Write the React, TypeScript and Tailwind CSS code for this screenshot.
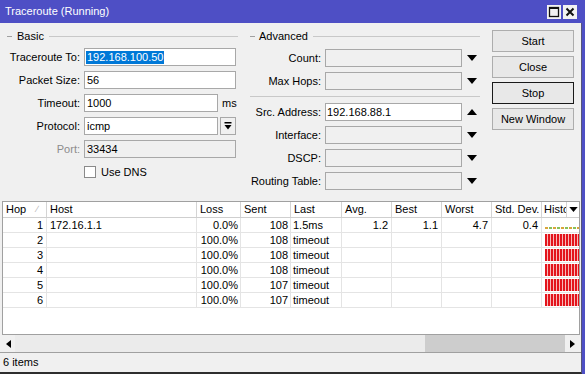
import React from "react";

function Down() {
  return (
    <svg width="10" height="6" viewBox="0 0 10 6">
      <polygon points="0,0 10,0 5,6" fill="#000" />
    </svg>
  );
}
function Up() {
  return (
    <svg width="10" height="6" viewBox="0 0 10 6">
      <polygon points="0,6 10,6 5,0" fill="#000" />
    </svg>
  );
}

function Input({ w, children, disabled }: { w: string; children?: React.ReactNode; disabled?: boolean }) {
  return (
    <div
      className={
        "h-[18px] border border-[#a8a8a8] flex items-center pl-[1px] whitespace-nowrap overflow-hidden " +
        w +
        (disabled ? " bg-[#f0f0f0]" : " bg-white")
      }
    >
      {children}
    </div>
  );
}

function BRow({ label, children, gray }: { label: string; children: React.ReactNode; gray?: boolean }) {
  return (
    <div className="h-[18px] flex items-center">
      <div className={"w-[80px] text-right " + (gray ? "text-[#8c8c8c]" : "")}>{label}</div>
      <div className="ml-[4px] flex items-center">{children}</div>
    </div>
  );
}

function ARow({ label, value, up }: { label: string; value?: string; up?: boolean }) {
  return (
    <div className="h-[18px] flex items-center">
      <div className="w-[77px] text-right whitespace-nowrap">{label}</div>
      <div className="ml-[4px]">
        <Input w="w-[137px]" disabled={!value}>
          {value}
        </Input>
      </div>
      <div className="w-[20px] flex justify-center">{up ? <Up /> : <Down />}</div>
    </div>
  );
}

function Btn({ label, focus }: { label: string; focus?: boolean }) {
  return (
    <div
      className={
        "w-[82px] h-[22px] flex items-center justify-center bg-[#e8e8e8] border " +
        (focus ? "border-[#1a1a1a]" : "border-[#adadad]")
      }
    >
      {label}
    </div>
  );
}

const rows = [
  { hop: "1", host: "172.16.1.1", loss: "0.0%", sent: "108", last: "1.5ms", avg: "1.2", best: "1.1", worst: "4.7", sd: "0.4", ok: true },
  { hop: "2", host: "", loss: "100.0%", sent: "108", last: "timeout", avg: "", best: "", worst: "", sd: "", ok: false },
  { hop: "3", host: "", loss: "100.0%", sent: "108", last: "timeout", avg: "", best: "", worst: "", sd: "", ok: false },
  { hop: "4", host: "", loss: "100.0%", sent: "108", last: "timeout", avg: "", best: "", worst: "", sd: "", ok: false },
  { hop: "5", host: "", loss: "100.0%", sent: "107", last: "timeout", avg: "", best: "", worst: "", sd: "", ok: false },
  { hop: "6", host: "", loss: "100.0%", sent: "107", last: "timeout", avg: "", best: "", worst: "", sd: "", ok: false },
];

const grid = "grid grid-cols-[44px_150px_44px_50px_51px_50px_50px_50px_50px_37px]";
const hgrid = "grid grid-cols-[44px_150px_44px_50px_51px_50px_50px_50px_50px_25px_12px]";

export default function App() {
  return (
    <div className="w-[585px] h-[374px] bg-[#4e4fc5] flex flex-col overflow-hidden text-[11px] text-black [font-family:'Liberation_Sans',Arial,sans-serif] leading-none">
      {/* Title bar */}
      <div className="h-[23px] flex items-center justify-between pl-[5px] pr-[8px] text-white text-[11px]">
        <span>Traceroute (Running)</span>
        <div className="flex gap-[2px]">
          <div className="w-[14px] h-[14px] bg-[#f2f2f2] flex items-center justify-center">
            <svg width="12" height="12" viewBox="0 0 12 12">
              <rect x="1.5" y="1.5" width="9" height="9" fill="none" stroke="#111" strokeWidth="1.3" />
              <rect x="1" y="1" width="10" height="2" fill="#111" />
            </svg>
          </div>
          <div className="w-[14px] h-[14px] bg-[#f2f2f2] flex items-center justify-center">
            <svg width="12" height="12" viewBox="0 0 12 12">
              <path d="M2.5 2.5 L9.5 9.5 M9.5 2.5 L2.5 9.5" stroke="#111" strokeWidth="2" />
            </svg>
          </div>
        </div>
      </div>

      {/* Body */}
      <div className="w-[582px] h-[351px] bg-[#f0f0f0] border-r border-r-[#55557a] border-b-2 border-b-[#2e2e2e] flex flex-col">
        {/* Top section */}
        <div className="h-[178px] flex">
          {/* Basic */}
          <div className="w-[244px] flex flex-col">
            <div className="mt-[7px] h-[13px] flex items-center pl-[7px] pr-[6px]">
              <div className="w-[5px] h-px bg-[#a0a0a0]" />
              <span className="ml-[5px]">Basic</span>
              <div className="flex-1 h-px bg-[#c8c8c8] ml-[5px]" />
            </div>
            <div className="mt-[5px] flex flex-col gap-[5px]">
              <BRow label="Traceroute To:">
                <Input w="w-[152px]">
                  <span className="bg-[#0078d7] text-white px-[1px] py-[1px]">192.168.100.50</span>
                </Input>
              </BRow>
              <BRow label="Packet Size:">
                <Input w="w-[152px]">
                  <span className="pl-[1px]">56</span>
                </Input>
              </BRow>
              <BRow label="Timeout:">
                <Input w="w-[134px]">
                  <span className="pl-[1px]">1000</span>
                </Input>
                <span className="ml-[4px]">ms</span>
              </BRow>
              <BRow label="Protocol:">
                <Input w="w-[134px]">
                  <span className="pl-[1px]">icmp</span>
                </Input>
                <div className="ml-[2px] w-[16px] h-[18px] border border-[#a8a8a8] bg-[#f0f0f0] flex items-center justify-center">
                  <svg width="8" height="8" viewBox="0 0 8 8">
                    <rect x="0.5" y="0" width="7" height="1.5" fill="#000" />
                    <polygon points="0.5,3 7.5,3 4,7.5" fill="#000" />
                  </svg>
                </div>
              </BRow>
              <BRow label="Port:" gray>
                <Input w="w-[152px]" disabled>
                  <span className="pl-[1px]">33434</span>
                </Input>
              </BRow>
              <div className="h-[18px] flex items-center">
                <div className="ml-[84px] w-[12px] h-[12px] bg-white border border-[#8a8a8a]" />
                <span className="ml-[5px]">Use DNS</span>
              </div>
            </div>
          </div>

          {/* Advanced */}
          <div className="w-[248px] flex flex-col">
            <div className="mt-[7px] h-[13px] flex items-center pl-[6px] pr-[12px]">
              <div className="w-[5px] h-px bg-[#a0a0a0]" />
              <span className="ml-[4px]">Advanced</span>
              <div className="flex-1 h-px bg-[#c8c8c8] ml-[5px]" />
            </div>
            <div className="mt-[6px] flex flex-col gap-[5px]">
              <ARow label="Count:" />
              <ARow label="Max Hops:" />
              <div className="my-[1px] ml-[6px] mr-[12px] h-px bg-[#c8c8c8]" />
              <ARow label="Src. Address:" value="192.168.88.1" up />
              <ARow label="Interface:" />
              <ARow label="DSCP:" />
              <ARow label="Routing Table:" />
            </div>
          </div>

          {/* Buttons */}
          <div className="pt-[7px] flex flex-col gap-[4px]">
            <Btn label="Start" />
            <Btn label="Close" />
            <Btn label="Stop" focus />
            <Btn label="New Window" />
          </div>
        </div>

        {/* Table */}
        <div className="h-[134px] ml-[2px] w-[578px] border border-[#a0a0a0] bg-white flex flex-col overflow-hidden">
          <div className={hgrid + " h-[16px] border-b border-[#cfcfcf]"}>
            <div className="flex items-center justify-between pl-[3px] pr-[8px] border-r border-[#d4d4d4]">
              <span>Hop</span>
              <span className="text-[#b0b0b0] text-[9px]">∕</span>
            </div>
            {["Host", "Loss", "Sent", "Last", "Avg.", "Best", "Worst", "Std. Dev."].map((h) => (
              <div key={h} className="flex items-center pl-[3px] border-r border-[#d4d4d4] whitespace-nowrap">
                {h}
              </div>
            ))}
            <div className="flex items-center pl-[2px] border-r border-[#d4d4d4] overflow-hidden whitespace-nowrap">Histo</div>
            <div className="flex items-center justify-center">
              <svg width="9" height="5" viewBox="0 0 10 6">
                <polygon points="0,0 10,0 5,6" fill="#000" />
              </svg>
            </div>
          </div>
          {rows.map((r) => (
            <div key={r.hop} className={grid + " h-[15px] border-b border-[#e4e4e4]"}>
              <div className="flex items-center justify-end pr-[3px] border-r border-[#e4e4e4]">{r.hop}</div>
              <div className="flex items-center pl-[3px] border-r border-[#e4e4e4]">{r.host}</div>
              <div className="flex items-center justify-end pr-[2px] border-r border-[#e4e4e4]">{r.loss}</div>
              <div className="flex items-center justify-end pr-[2px] border-r border-[#e4e4e4]">{r.sent}</div>
              <div className="flex items-center pl-[2px] border-r border-[#e4e4e4]">{r.last}</div>
              <div className="flex items-center justify-end pr-[3px] border-r border-[#e4e4e4]">{r.avg}</div>
              <div className="flex items-center justify-end pr-[3px] border-r border-[#e4e4e4]">{r.best}</div>
              <div className="flex items-center justify-end pr-[3px] border-r border-[#e4e4e4]">{r.worst}</div>
              <div className="flex items-center justify-end pr-[3px] border-r border-[#e4e4e4]">{r.sd}</div>
              <div className="pl-[3px] flex">
                {r.ok ? (
                  <div className="w-full flex flex-col justify-end pb-[3px]">
                    <div className="h-[2px] w-full bg-[image:repeating-linear-gradient(90deg,#d9a53a_0px,#d9a53a_3px,#ffffff_3px,#ffffff_4px,#86c15a_4px,#86c15a_7px,#ffffff_7px,#ffffff_8px)]" />
                  </div>
                ) : (
                  <div className="w-full my-[1px] bg-[image:repeating-linear-gradient(90deg,#e3141c_0px,#e3141c_2px,#f7b8b8_2px,#f7b8b8_3px)]" />
                )}
              </div>
            </div>
          ))}
          <div className="flex-1" />
        </div>

        {/* Scrollbar */}
        <div className="h-[17px] ml-[2px] w-[576px] flex">
          <div className="w-[13px] h-full bg-[#f0f0f0] flex items-center justify-center">
            <svg width="6" height="8" viewBox="0 0 6 8">
              <polygon points="0,4 5,0 5,8" fill="#000" />
            </svg>
          </div>
          <div className="flex-1 flex bg-[#ebebeb]">
            <div className="w-[410px]" />
            <div className="w-[140px] bg-[#cdcdcd]" />
          </div>
          <div className="w-[13px] h-full bg-[#f0f0f0] flex items-center justify-center">
            <svg width="6" height="8" viewBox="0 0 6 8">
              <polygon points="6,4 1,0 1,8" fill="#000" />
            </svg>
          </div>
        </div>

        {/* Status bar */}
        <div className="h-[20px] border-t border-[#a0a0a0] flex items-center pl-[3px]">6 items</div>
      </div>
    </div>
  );
}
